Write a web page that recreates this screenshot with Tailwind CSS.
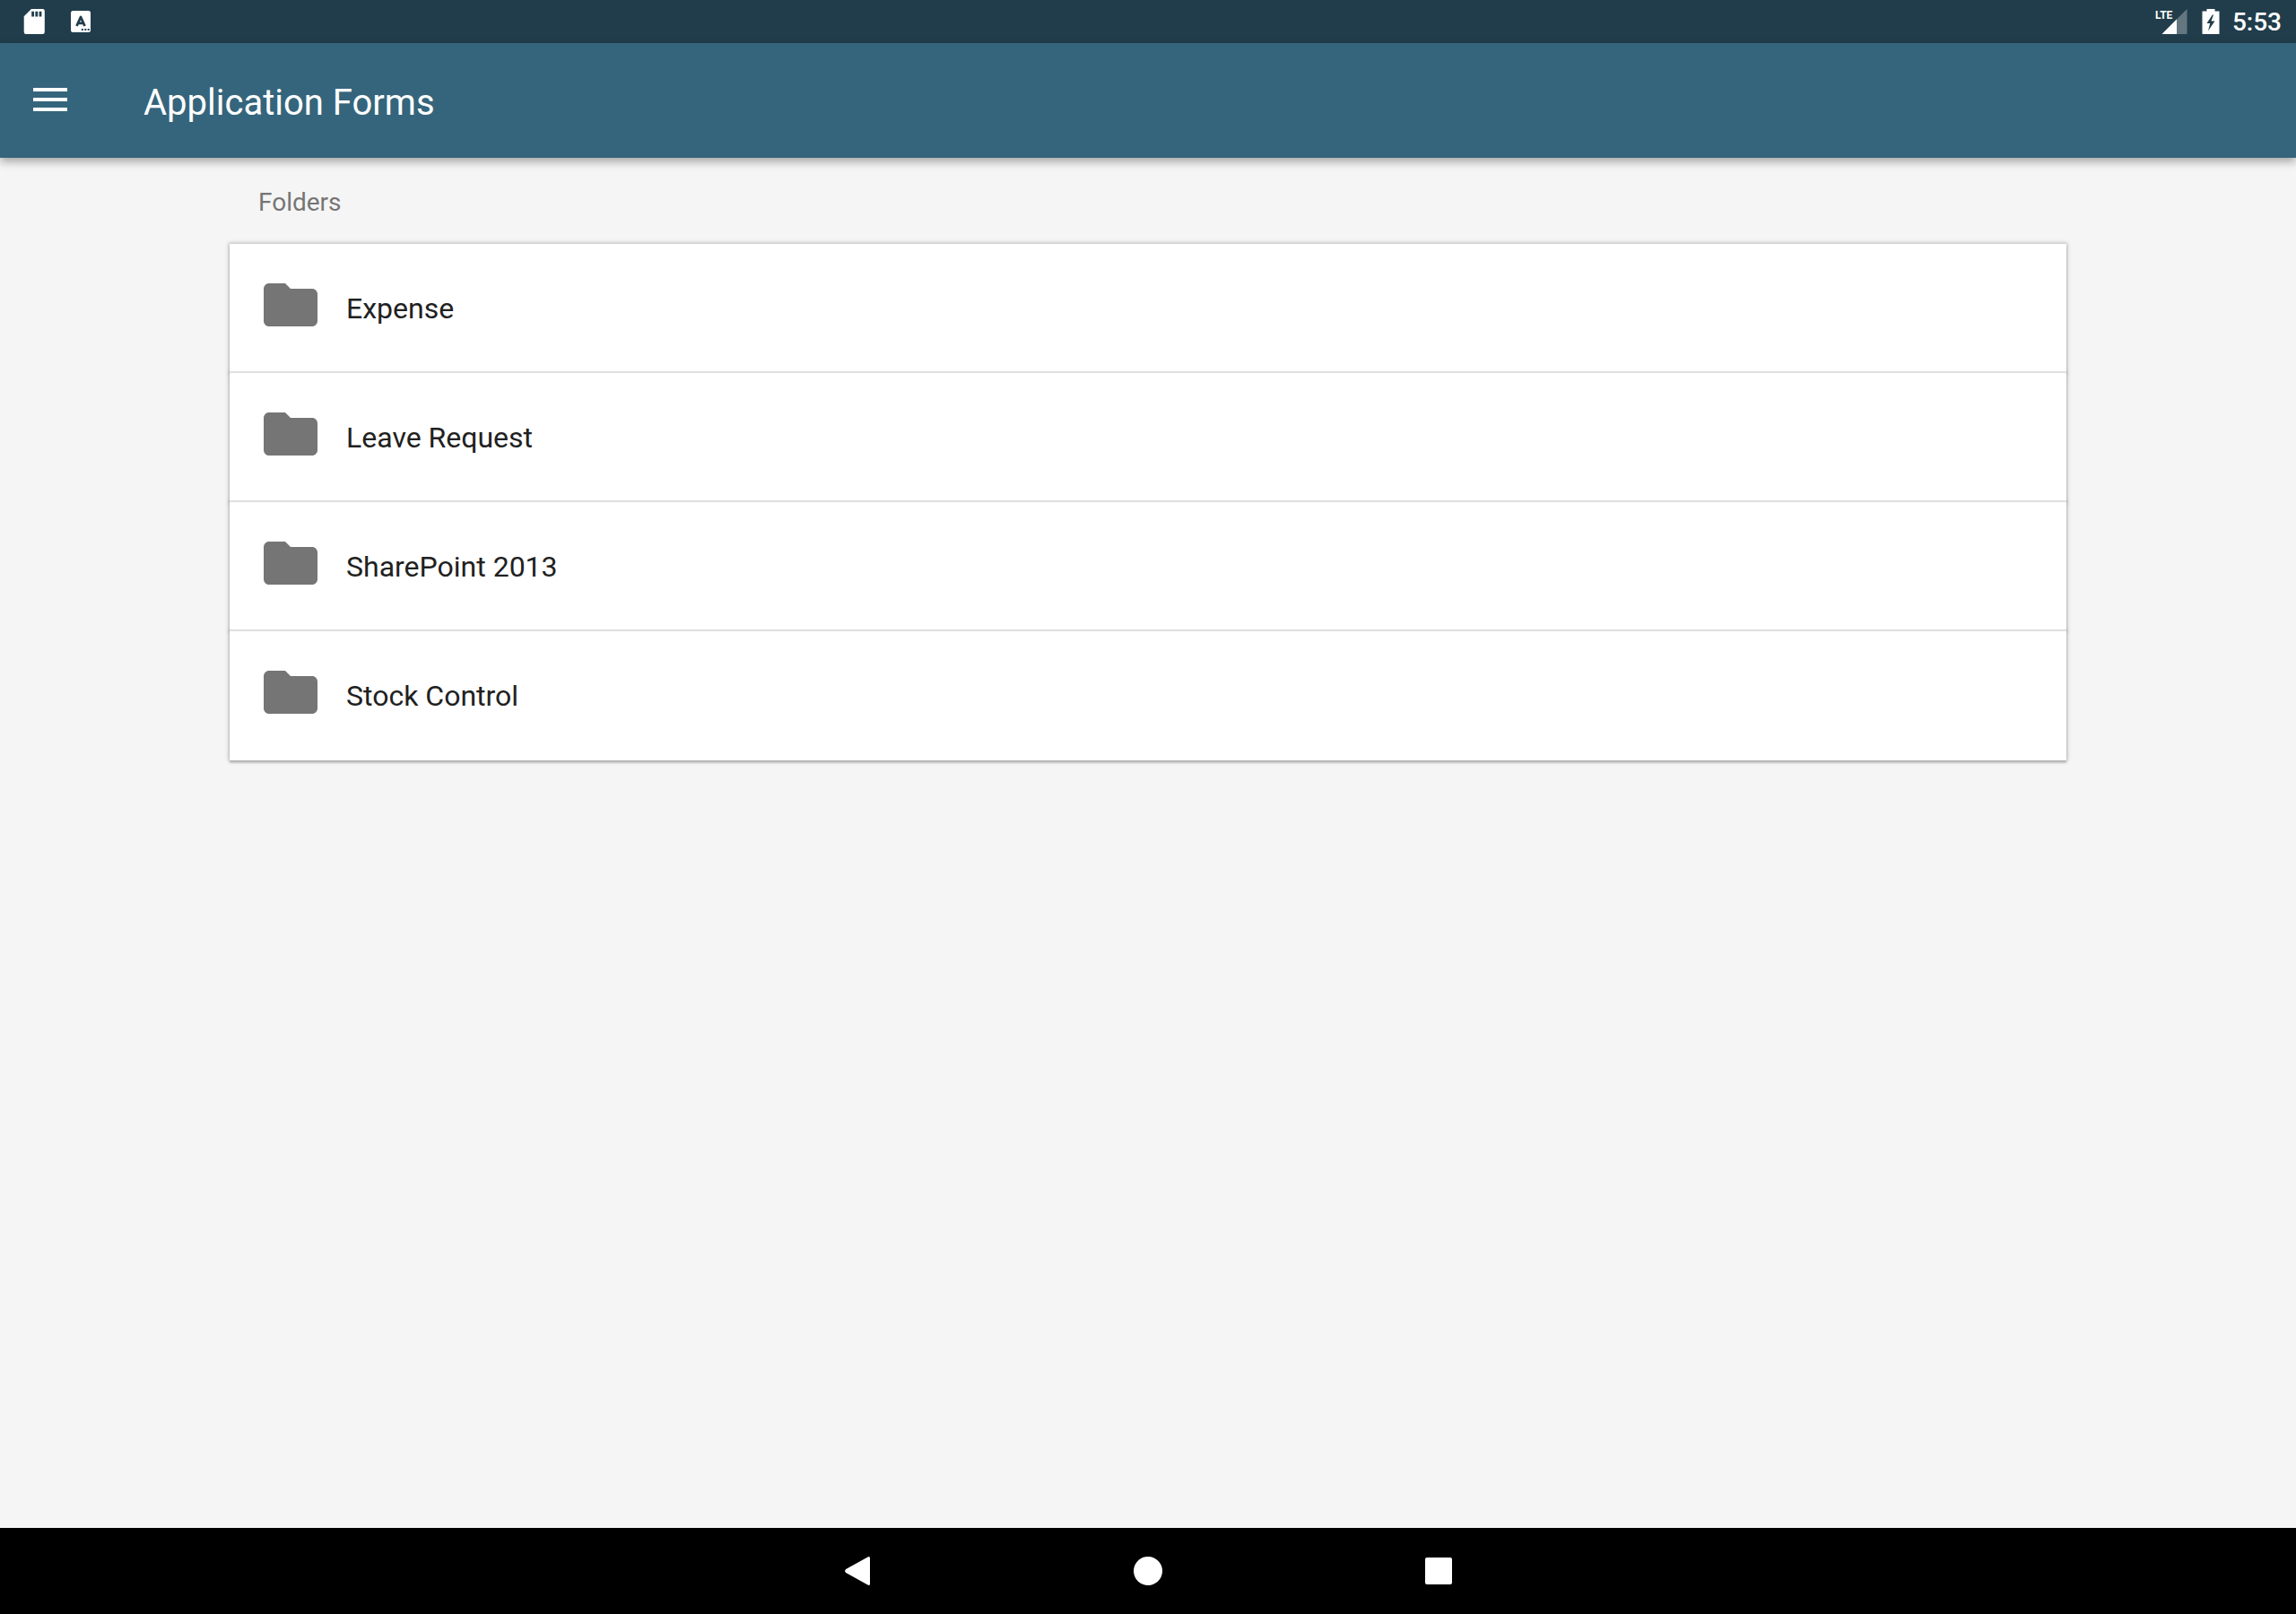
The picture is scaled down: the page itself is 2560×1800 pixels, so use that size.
<!DOCTYPE html>
<html lang="en">
<head>
  <meta charset="UTF-8">
  <meta name="viewport" content="width=device-width, initial-scale=1.0">
  <title>Application Forms</title>
  <script src="https://cdn.jsdelivr.net/npm/@tailwindcss/browser@4"></script>
</head>
<body class="min-h-screen flex flex-col bg-[#f5f5f5] font-['Roboto',sans-serif] text-[#212121]">
  <!-- Status bar -->
  <div class="h-12 px-4 flex items-center justify-between bg-[#213d4b] text-white">
    <div class="flex items-center gap-7 pl-[10px]">
      <svg class="w-6 h-7" viewBox="0 0 24 28" fill="currentColor" aria-hidden="true">
        <path fill-rule="evenodd" d="M9 0H21.500a2.300 2.300 0 0 1 2.300 2.300V25.700a2.300 2.300 0 0 1-2.300 2.300H3a2.300 2.300 0 0 1-2.300-2.300V8.300ZM9.200 2.800V8.500H12V2.800ZM13.400 2.800V8.500H16.200V2.800ZM17.600 2.800V8.500H20.400V2.800Z"/>
      </svg>
      <svg class="w-6 h-6" viewBox="0 0 24 24" fill="currentColor" aria-hidden="true">
        <rect x="1" y="0" width="22" height="24" rx="2.500"/>
        <path d="M7.500 17 12 7 16.500 17M9 13.800H15" fill="none" stroke="#213d4b" stroke-width="2.800" stroke-linejoin="round"/>
        <path d="M12.800 20H14.800V22H12.800ZM16.300 20H18.300V22H16.300ZM19.700 20H21.700V22H19.700Z" fill="#213d4b"/>
      </svg>
    </div>
    <div class="flex items-center">
      <svg class="w-9 h-7 mr-4" viewBox="0 0 36 28" fill="currentColor" aria-hidden="true">
        <path d="M35.500 0V28H7.500Z" fill-opacity=".3"/>
        <path d="M24 11.500V28H7.500Z"/>
        <text x="0" y="11" font-size="12" font-weight="700" font-family="Roboto, sans-serif">LTE</text>
      </svg>
      <svg class="w-5 h-7 mr-[14px]" viewBox="0 0 20 28" fill="currentColor" aria-hidden="true">
        <path fill-rule="evenodd" d="M5.500 0H14.500V2.500H19.500V28H.500V2.500H5.500ZM11.800 6.500 5.500 16H9.200L7 24.500 14.500 13.500H10.500L13 6.500Z"/>
      </svg>
      <span class="pt-0.5 text-[28px] leading-8 font-medium">5:53</span>
    </div>
  </div>

  <!-- App bar -->
  <header class="h-32 px-8 flex items-center bg-[#35657c] text-white shadow-[0_4px_10px_rgba(0,0,0,0.35)]">
    <button type="button" aria-label="Open menu" class="w-12 h-12 mr-20 flex items-center justify-center">
      <svg class="w-[38px] h-7 pb-0.5" viewBox="0 0 38 26" fill="currentColor" aria-hidden="true">
        <path d="M0 0H38V4H0ZM0 11H38V15H0ZM0 22H38V26H0Z"/>
      </svg>
    </button>
    <h1 class="pt-1.5 text-[40px] leading-12">Application Forms</h1>
  </header>

  <!-- Folder list -->
  <main class="flex-1 px-64">
    <h2 class="h-24 pt-1 pl-8 flex items-center text-[28px] text-[#757575]">Folders</h2>
    <ul class="text-[32px]">
      <li class="shadow-[0_0_4px_1px_rgba(0,0,0,0.25),0_3px_2px_rgba(0,0,0,0.15)]">
        <a href="#expense" class="relative h-36 px-8 flex items-center gap-[26px] bg-white border-b-2 border-[#dfdfdf]">
          <svg class="w-18 h-18 mb-1.5 fill-[#757575]" viewBox="0 0 24 24" aria-hidden="true"><path d="M10 4H4c-1.100 0-1.990.9-1.990 2L2 18c0 1.100.9 2 2 2h16c1.100 0 2-.9 2-2V8c0-1.100-.9-2-2-2h-8l-2-2z"/></svg>
          <span class="pt-0.5">Expense</span>
        </a>
      </li>
      <li class="shadow-[0_0_4px_1px_rgba(0,0,0,0.25),0_3px_2px_rgba(0,0,0,0.15)]">
        <a href="#leave-request" class="relative h-36 px-8 flex items-center gap-[26px] bg-white border-b-2 border-[#dfdfdf]">
          <svg class="w-18 h-18 mb-1.5 fill-[#757575]" viewBox="0 0 24 24" aria-hidden="true"><path d="M10 4H4c-1.100 0-1.990.9-1.990 2L2 18c0 1.100.9 2 2 2h16c1.100 0 2-.9 2-2V8c0-1.100-.9-2-2-2h-8l-2-2z"/></svg>
          <span class="pt-0.5">Leave Request</span>
        </a>
      </li>
      <li class="shadow-[0_0_4px_1px_rgba(0,0,0,0.25),0_3px_2px_rgba(0,0,0,0.15)]">
        <a href="#sharepoint-2013" class="relative h-36 px-8 flex items-center gap-[26px] bg-white border-b-2 border-[#dfdfdf]">
          <svg class="w-18 h-18 mb-1.5 fill-[#757575]" viewBox="0 0 24 24" aria-hidden="true"><path d="M10 4H4c-1.100 0-1.990.9-1.990 2L2 18c0 1.100.9 2 2 2h16c1.100 0 2-.9 2-2V8c0-1.100-.9-2-2-2h-8l-2-2z"/></svg>
          <span class="pt-0.5">SharePoint 2013</span>
        </a>
      </li>
      <li class="shadow-[0_0_4px_1px_rgba(0,0,0,0.25),0_3px_2px_rgba(0,0,0,0.15)]">
        <a href="#stock-control" class="relative h-36 px-8 flex items-center gap-[26px] bg-white border-b-2 border-white">
          <svg class="w-18 h-18 mb-1.5 fill-[#757575]" viewBox="0 0 24 24" aria-hidden="true"><path d="M10 4H4c-1.100 0-1.990.9-1.990 2L2 18c0 1.100.9 2 2 2h16c1.100 0 2-.9 2-2V8c0-1.100-.9-2-2-2h-8l-2-2z"/></svg>
          <span class="pt-0.5">Stock Control</span>
        </a>
      </li>
    </ul>
  </main>

  <!-- System navigation -->
  <nav class="h-24 flex justify-center bg-black text-white">
    <button type="button" aria-label="Back" class="w-[324px] flex items-center justify-center">
      <svg class="w-7 h-8" viewBox="0 0 28 32" fill="currentColor" aria-hidden="true"><path d="M25.500.5Q28-.8 28 1.800V30.200Q28 32.800 25.500 31.500L1.200 18Q-1 16 1.200 14Z"/></svg>
    </button>
    <button type="button" aria-label="Home" class="w-[324px] flex items-center justify-center">
      <span class="size-8 rounded-full bg-white"></span>
    </button>
    <button type="button" aria-label="Recent apps" class="w-[324px] flex items-center justify-center">
      <span class="size-[30px] rounded-[2px] bg-white"></span>
    </button>
  </nav>
</body>
</html>
